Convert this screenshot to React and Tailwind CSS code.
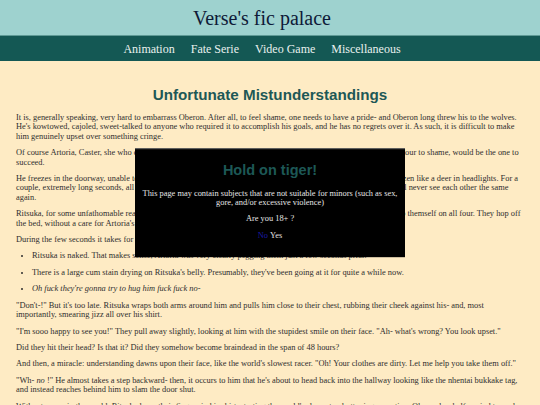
import { useState } from "react";

const serif = "font-['Liberation_Serif','Times_New_Roman',serif]";

const navLinks = ["Animation", "Fate Serie", "Video Game", "Miscellaneous"];

function AgeGate() {
  const [open, setOpen] = useState(true);
  if (!open) return null;

  return (
    <div className="fixed left-1/2 top-1/2 w-[270px] -translate-x-1/2 -translate-y-1/2 border-t border-[#6b6b6b] bg-black px-[4px] pt-[12px] pb-[17px] text-center">
      <h2 className="font-['Liberation_Sans',Arial,sans-serif] text-[14.5px] font-bold leading-[18px] text-[#1d5856]">
        Hold on tiger!
      </h2>
      <p className={`${serif} mt-[10px] text-[8.4px] leading-[9.4px] text-[#e6e6e6]`}>
        This page may contain subjects that are not suitable for minors (such as sex,
        gore, and/or excessive violence)
      </p>
      <p className={`${serif} mt-[7px] text-[8.4px] leading-[9.4px] text-[#e6e6e6]`}>
        Are you 18+ ?
      </p>
      <p className={`${serif} mt-[7px] text-[8.4px] leading-[9.4px] text-[#e6e6e6]`}>
        <a href="#" className="text-[#1a1aa6]" onClick={(e) => e.preventDefault()}>
          No
        </a>{" "}
        <button className="cursor-pointer" onClick={() => setOpen(false)}>
          Yes
        </button>
      </p>
    </div>
  );
}

const App = () => {
  return (
    <div className="min-h-screen bg-[#feebc4]">
      {/* Site header */}
      <header className="flex h-[35px] items-center justify-center bg-[#9ed2cf] pr-[16px]">
        <h1 className={`${serif} text-[20px] leading-none text-[#0e1a38]`}>
          Verse&apos;s fic palace
        </h1>
      </header>

      {/* Category nav, each link carries its own right margin */}
      <nav className="flex h-[26px] items-center justify-center border-t border-[#5f9a96] bg-[#145854]">
        {navLinks.map((link) => (
          <a key={link} href="#" className={`${serif} mr-[16px] text-[12px] leading-none text-[#e9f1ef]`}>
            {link}
          </a>
        ))}
      </nav>

      {/* Story */}
      <main className={`${serif} px-4 pt-[25px] pb-6 text-[8.4px] leading-[9.4px] text-[#2e2e2e]`}>
        <h2 className="mb-[9px] text-center font-['Liberation_Sans',Arial,sans-serif] text-[15.2px] font-bold leading-[18px] text-[#1d5856]">
          Unfortunate Mistunderstandings
        </h2>

        <div className="space-y-[7px]">
          <p>
            It is, generally speaking, very hard to embarrass Oberon. After all, to feel shame, one needs to have a pride- and Oberon long threw his to the wolves. He&apos;s kowtowed, cajoled, sweet-talked to anyone who required it to accomplish his goals, and he has no regrets over it. As such, it is difficult to make him genuinely upset over something cringe.
          </p>
          <p>
            Of course Artoria, Caster, she who could put even the most brazen of the fae&apos;s courtiers and their own shameless ardour to shame, would be the one to succeed.
          </p>
          <p>
            He freezes in the doorway, unable to tear his eyes away from the scene unfolding on the bed, staring wide-eyed, frozen like a deer in headlights. For a couple, extremely long seconds, all three of them stare at each other in utter silence, and he knows deep down they&apos;ll never see each other the same again.
          </p>
          <p>
            Ritsuka, for some unfathomable reason, is the first to recover, wriggling out from under Artoria&apos;s weight just to prop themself on all four. They hop off the bed, without a care for Artoria&apos;s protests.
          </p>
          <p>During the few seconds it takes for Ritsuka to reach him, Oberon notices:</p>

          <ul className="list-disc space-y-[7px] pl-[16px]">
            <li>Ritsuka is naked. That makes sense, Artoria was very clearly pegging them just a few seconds prior.</li>
            <li>There is a large cum stain drying on Ritsuka&apos;s belly. Presumably, they&apos;ve been going at it for quite a while now.</li>
            <li className="italic">Oh fuck they&apos;re gonna try to hug him fuck fuck no-</li>
          </ul>

          <p>
            &quot;Don&apos;t-!&quot; But it&apos;s too late. Ritsuka wraps both arms around him and pulls him close to their chest, rubbing their cheek against his- and, most importantly, smearing jizz all over his shirt.
          </p>
          <p>
            &quot;I&apos;m sooo happy to see you!&quot; They pull away slightly, looking at him with the stupidest smile on their face. &quot;Ah- what&apos;s wrong? You look upset.&quot;
          </p>
          <p>
            Did they hit their head? Is that it? Did they somehow become braindead in the span of 48 hours?
          </p>
          <p>
            And then, a miracle: understanding dawns upon their face, like the world&apos;s slowest racer. &quot;Oh! Your clothes are dirty. Let me help you take them off.&quot;
          </p>
          <p>
            &quot;Wh- <i>no</i> !&quot; He almost takes a step backward- then, it occurs to him that he&apos;s about to head back into the hallway looking like the nhentai bukkake tag, and instead reaches behind him to slam the door shut.
          </p>
          <p>
            Without a care in the world, Ritsuka laces their fingers in his shirt, starting the world&apos;s slowest unbuttoning operation. Oberon has half a mind to push them away and be done with it.
          </p>
        </div>
      </main>

      <AgeGate />
    </div>
  );
};

export default App;
